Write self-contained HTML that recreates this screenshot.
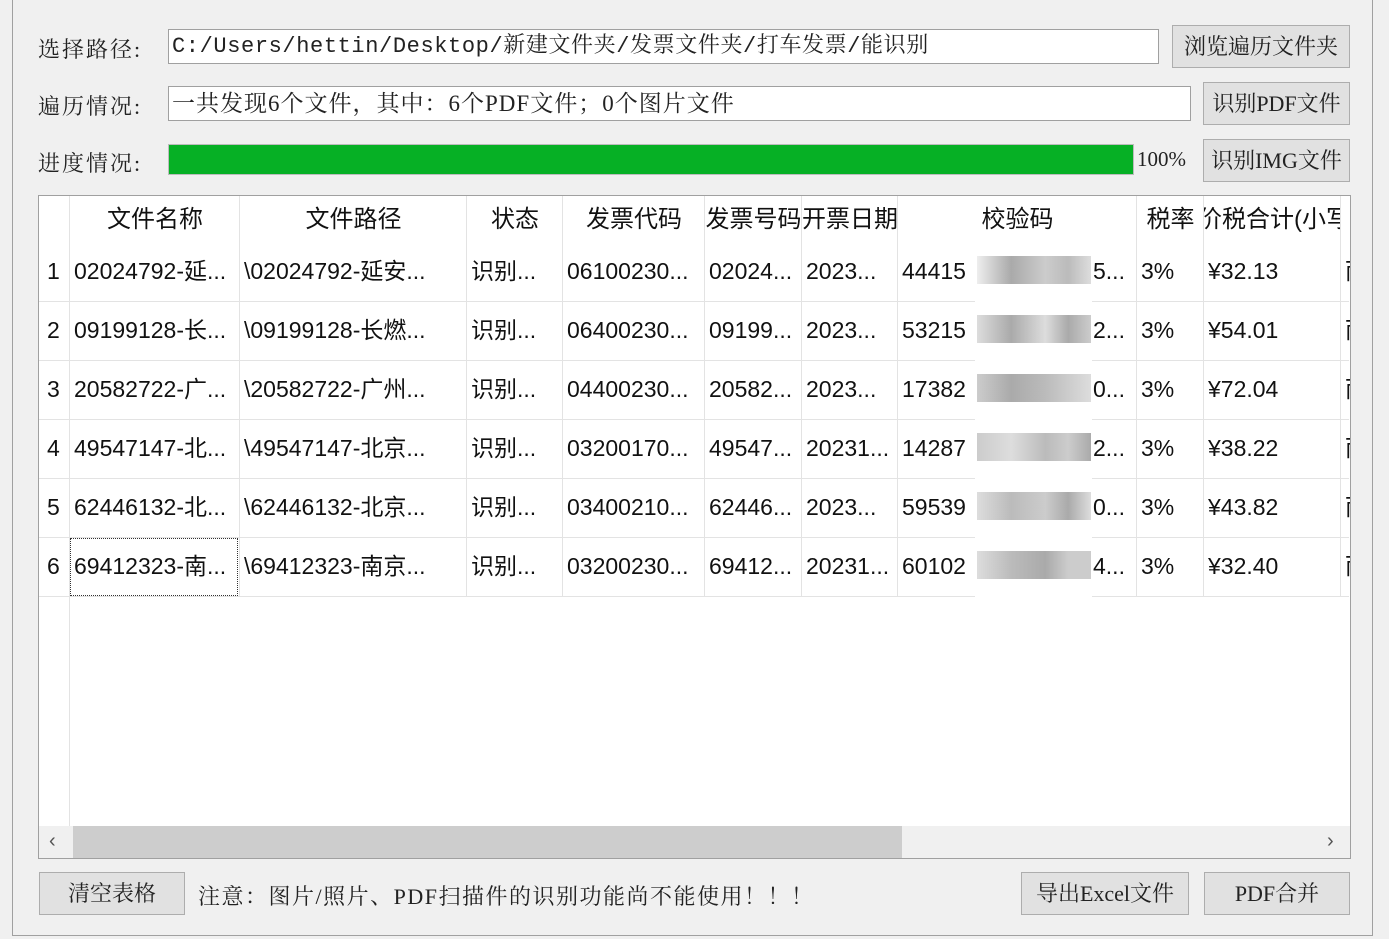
<!DOCTYPE html>
<html><head><meta charset="utf-8"><style>
*{margin:0;padding:0;box-sizing:border-box}
body{width:1389px;height:939px;background:#f0f0f0;position:relative;overflow:hidden;font-family:"Liberation Sans","Noto Sans CJK SC",sans-serif}
.a{position:absolute;white-space:nowrap}
.lbl{font-family:"Liberation Serif","Noto Serif CJK SC",serif;font-size:22px;color:#222;letter-spacing:2px}
.inp{background:#fff;border:1px solid #a0a0a0;font-family:"Liberation Mono","Noto Serif CJK SC",monospace;font-size:22px;color:#222;padding-left:3px;line-height:33px;overflow:hidden}
.btn{background:#e1e1e1;border:1px solid #adadad;font-family:"Liberation Serif","Noto Serif CJK SC",serif;font-size:22px;color:#222;text-align:center}
.cell{position:absolute;font-size:23px;color:#111;overflow:hidden;white-space:nowrap;height:59px;line-height:57px;padding-left:4px}
.hd{position:absolute;font-size:24px;color:#111;overflow:hidden;white-space:nowrap;top:0;height:48px;line-height:48px;text-align:center;display:flex;justify-content:center}
.vl{position:absolute;top:0;width:1px;background:#e3e3e3}
.hl{position:absolute;height:1px;background:#e3e3e3}
</style></head><body>
<div class="a" style="left:12px;top:0;width:1px;height:936px;background:#a0a0a0"></div>
<div class="a" style="left:1372px;top:0;width:1px;height:936px;background:#a0a0a0"></div>
<div class="a" style="left:12px;top:935px;width:1361px;height:1px;background:#a0a0a0"></div>

<div class="a lbl" style="left:38px;top:33px">选择路径:</div>
<div class="a lbl" style="left:38px;top:90px">遍历情况:</div>
<div class="a lbl" style="left:38px;top:147px">进度情况:</div>
<div class="a inp" style="left:168px;top:29px;width:991px;height:35px;letter-spacing:0.6px">C:/Users/hettin/Desktop/新建文件夹/发票文件夹/打车发票/能识别</div>
<div class="a inp" style="left:168px;top:86px;width:1023px;height:35px;font-family:'Liberation Serif','Noto Serif CJK SC',serif;font-size:23px;letter-spacing:1px">一共发现6个文件，其中：6个PDF文件；0个图片文件</div>
<div class="a" style="left:168px;top:144px;width:966px;height:31px;background:#06b025;border:1px solid #bcbcbc"></div>
<div class="a lbl" style="left:1137px;top:147px;font-size:21px;letter-spacing:0">100%</div>
<div class="a btn" style="left:1172px;top:25px;width:178px;height:43px;line-height:41px">浏览遍历文件夹</div>
<div class="a btn" style="left:1203px;top:82px;width:147px;height:43px;line-height:41px">识别PDF文件</div>
<div class="a btn" style="left:1203px;top:139px;width:147px;height:43px;line-height:41px">识别IMG文件</div>

<div class="a" style="left:38px;top:195px;width:1313px;height:664px;background:#fff;border:1px solid #a0a0a0;overflow:hidden">
<div style="position:absolute;left:0;top:0;width:1310px;height:662px">
<div class="hd" style="left:31px;width:170px">文件名称</div>
<div class="hd" style="left:201px;width:227px">文件路径</div>
<div class="hd" style="left:428px;width:96px">状态</div>
<div class="hd" style="left:524px;width:142px">发票代码</div>
<div class="hd" style="left:666px;width:97px">发票号码</div>
<div class="hd" style="left:763px;width:96px">开票日期</div>
<div class="hd" style="left:859px;width:239px">校验码</div>
<div class="hd" style="left:1098px;width:67px">税率</div>
<div class="hd" style="left:1165px;width:137px;justify-content:flex-start;padding-left:4px"><span style="margin-left:-10px">价税合计(小写)</span></div>
<div class="vl" style="left:30px;height:662px"></div>
<div class="vl" style="left:200px;height:400px"></div>
<div class="vl" style="left:427px;height:400px"></div>
<div class="vl" style="left:523px;height:400px"></div>
<div class="vl" style="left:665px;height:400px"></div>
<div class="vl" style="left:762px;height:400px"></div>
<div class="vl" style="left:858px;height:400px"></div>
<div class="vl" style="left:1097px;height:400px"></div>
<div class="vl" style="left:1164px;height:400px"></div>
<div class="vl" style="left:1301px;height:400px"></div>
<div class="hl" style="left:0;top:105px;width:1310px"></div>
<div class="hl" style="left:0;top:164px;width:1310px"></div>
<div class="hl" style="left:0;top:223px;width:1310px"></div>
<div class="hl" style="left:0;top:282px;width:1310px"></div>
<div class="hl" style="left:0;top:341px;width:1310px"></div>
<div class="hl" style="left:0;top:400px;width:1310px"></div>
</div>
<div id="rows"></div>
<!-- blur -->
<div class="a" style="left:936px;top:40px;width:117px;height:370px;background:#fff"></div>
<div class="a" style="left:938px;top:60px;width:114px;height:28px;background:linear-gradient(90deg,#eee,#aaa 30%,#ccc 60%,#bbb,#ddd)"></div>
<div class="a" style="left:938px;top:119px;width:114px;height:28px;background:linear-gradient(90deg,#ddd,#aaa 30%,#ddd 60%,#aaa,#ccc)"></div>
<div class="a" style="left:938px;top:178px;width:114px;height:28px;background:linear-gradient(90deg,#ccc,#aaa 30%,#bbb 60%,#ccc,#ddd)"></div>
<div class="a" style="left:938px;top:237px;width:114px;height:28px;background:linear-gradient(90deg,#ccc,#ddd 30%,#bbb 60%,#ccc,#aaa)"></div>
<div class="a" style="left:938px;top:296px;width:114px;height:28px;background:linear-gradient(90deg,#ddd,#bbb 30%,#ccc 60%,#aaa,#ddd)"></div>
<div class="a" style="left:938px;top:355px;width:114px;height:28px;background:linear-gradient(90deg,#ddd,#bbb 30%,#aaa 60%,#ccc,#ccc)"></div>
<!-- scrollbar -->
<div class="a" style="left:0;top:630px;width:1311px;height:33px;background:#f0f0f0"></div>
<div class="a" style="left:34px;top:630px;width:829px;height:33px;background:#cdcdcd"></div>
<div class="a" style="left:10px;top:634px;font-size:20px;color:#555">‹</div>
<div class="a" style="left:1288px;top:634px;font-size:20px;color:#555">›</div>
<div class="a" style="left:31px;top:342px;width:168px;height:58px;border:1px dotted #333"></div>
</div>

<div class="a btn" style="left:39px;top:872px;width:146px;height:43px;line-height:41px">清空表格</div>
<div class="a lbl" style="left:198px;top:880px;font-size:22px;letter-spacing:1.5px">注意：图片/照片、PDF扫描件的识别功能尚不能使用！！！</div>
<div class="a btn" style="left:1021px;top:872px;width:168px;height:43px;line-height:41px">导出Excel文件</div>
<div class="a btn" style="left:1204px;top:872px;width:146px;height:43px;line-height:41px">PDF合并</div>

<script>
var d=[["02024792-延...","\\02024792-延安...","06100230...","02024...","2023...","44415","5...","¥32.13"],
["09199128-长...","\\09199128-长燃...","06400230...","09199...","2023...","53215","2...","¥54.01"],
["20582722-广...","\\20582722-广州...","04400230...","20582...","2023...","17382","0...","¥72.04"],
["49547147-北...","\\49547147-北京...","03200170...","49547...","20231...","14287","2...","¥38.22"],
["62446132-北...","\\62446132-北京...","03400210...","62446...","2023...","59539","0...","¥43.82"],
["69412323-南...","\\69412323-南京...","03200230...","69412...","20231...","60102","4...","¥32.40"]];
var h="";
d.forEach(function(r,i){var t=47+i*59;
function c(l,w,s){h+='<div class="cell" style="left:'+l+'px;top:'+t+'px;width:'+w+'px">'+s+'</div>';}
c(4,26,i+1);c(31,169,r[0]);c(201,226,r[1]);c(428,95,"识别...");c(524,141,r[2]);c(666,96,r[3]);c(763,95,r[4]);c(859,100,r[5]);c(1050,47,r[6]);c(1098,66,"3%");c(1165,136,r[7]);c(1302,10,"而");});
document.getElementById("rows").outerHTML=h;
</script>
</body></html>
